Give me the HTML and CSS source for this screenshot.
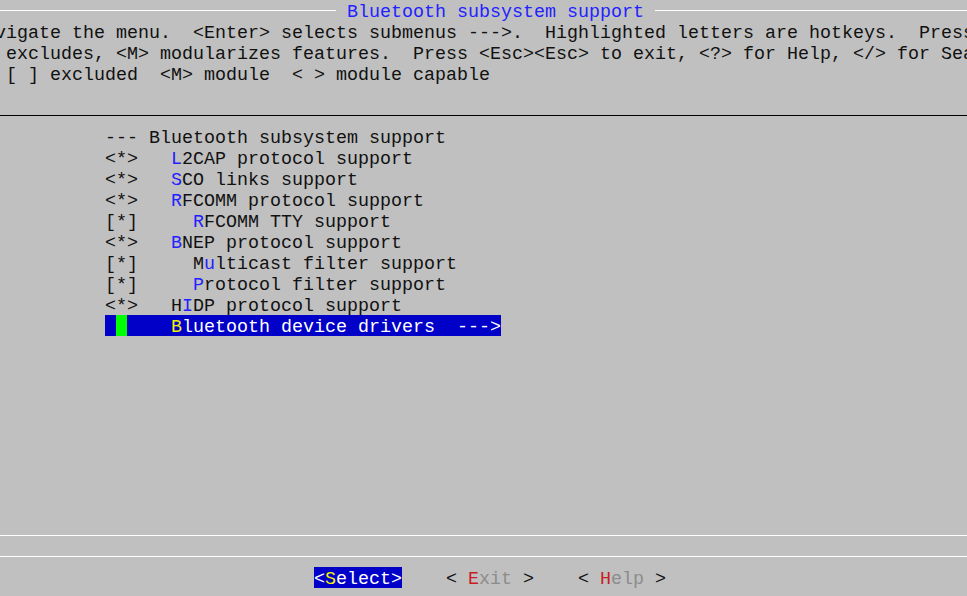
FILE: index.html
```html
<!DOCTYPE html>
<html lang="en">
<head>
    <meta charset="UTF-8">
    <meta name="viewport" content="width=device-width, initial-scale=1.0">
    <title>Bluetooth subsystem support</title>
    <link rel="stylesheet" href="styles.css">
</head>
<body>
    <div class="screen">
        <div class="title-row">
            <span class="rule rule-left"></span>
            <span class="title"> Bluetooth subsystem support </span>
            <span class="rule rule-right"></span>
        </div>

        <div class="help">
            <div class="line">vigate the menu.  &lt;Enter&gt; selects submenus ---&gt;.  Highlighted letters are hotkeys.  Pressing &lt;Y&gt; includes, &lt;N&gt;</div>
            <div class="line"> excludes, &lt;M&gt; modularizes features.  Press &lt;Esc&gt;&lt;Esc&gt; to exit, &lt;?&gt; for Help, &lt;/&gt; for Search.  Legend: [*] built-in</div>
            <div class="line"> [ ] excluded  &lt;M&gt; module  &lt; &gt; module capable</div>
            <div class="line"></div>
        </div>

        <div class="line-row"><span class="rule dark"></span></div>

        <div class="menu">
            <div class="item">--- Bluetooth subsystem support</div>
            <div class="item">&lt;*&gt;   <span class="hot">L</span>2CAP protocol support</div>
            <div class="item">&lt;*&gt;   <span class="hot">S</span>CO links support</div>
            <div class="item">&lt;*&gt;   <span class="hot">R</span>FCOMM protocol support</div>
            <div class="item">[*]     <span class="hot">R</span>FCOMM TTY support</div>
            <div class="item">&lt;*&gt;   <span class="hot">B</span>NEP protocol support</div>
            <div class="item">[*]     M<span class="hot">u</span>lticast filter support</div>
            <div class="item">[*]     <span class="hot">P</span>rotocol filter support</div>
            <div class="item">&lt;*&gt;   H<span class="hot">I</span>DP protocol support</div>
            <div class="item"><span class="selected"> <span class="cursor"> </span>    <span class="hot-sel">B</span>luetooth device drivers  ---&gt;</span></div>
        </div>

        <div class="line-row"><span class="rule light"></span></div>
        <div class="line-row"><span class="rule light"></span></div>

        <div class="buttons"><span class="button active">&lt;<span class="key-sel">S</span>elect&gt;</span>    <span class="button">&lt; <span class="key">E</span><span class="dim">xit</span> &gt;</span>    <span class="button">&lt; <span class="key">H</span><span class="dim">elp</span> &gt;</span></div>
    </div>
</body>
</html>
```

FILE: styles.css
```css
body {
    margin: 0;
    background-color: #c0c0c0;
    overflow: hidden;
}
/* 11px x 21px character cells, text sits a bit low in each cell */
.screen {
    width: 967px;
    height: 596px;
    overflow: hidden;
    font-family: "Liberation Mono", "DejaVu Sans Mono", monospace;
    font-size: 18.333px;
    line-height: 25px;
    color: #111;
}
.title-row {
    display: flex;
    align-items: center;
    height: 21px;
}
.rule {
    display: block;
    height: 1px;
    background: #fff;
}
.rule-left {
    width: 336px;
}
.rule-right {
    flex: 1;
}
.title {
    height: 21px;
    color: #2222ff;
    white-space: pre;
}
.help {
    margin-left: -5px;
}
.line,
.item,
.buttons {
    height: 21px;
    white-space: pre;
}
.line-row {
    display: flex;
    align-items: center;
    height: 21px;
}
.line-row .rule {
    flex: 1;
}
.rule.dark {
    background: #000;
}
.rule.light {
    background: #fff;
}
.menu {
    height: 399px;
    padding-left: 105px;
}
.hot {
    color: #2222ff;
}
.selected,
.button.active {
    display: inline-block;
    vertical-align: top;
    height: 21px;
    background: #0000c8;
    color: #fff;
}
.cursor {
    display: inline-block;
    vertical-align: top;
    height: 21px;
    background: #00ff00;
}
.hot-sel,
.key-sel {
    color: #f0f000;
}
.buttons {
    padding-left: 314px;
}
.key {
    color: #c81e1e;
}
.dim {
    color: #8c8c8c;
}
```
